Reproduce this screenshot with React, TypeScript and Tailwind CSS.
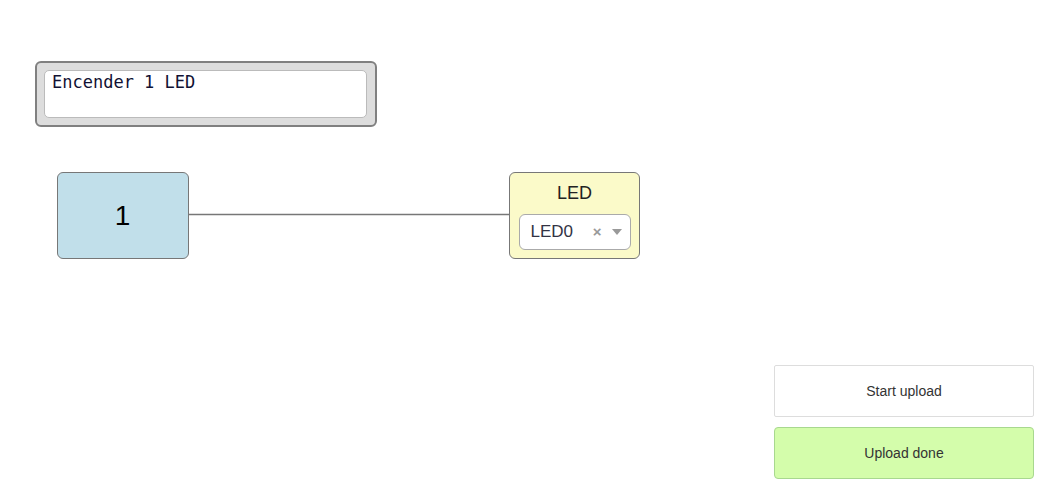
import React from "react";

export default function App() {
  return (
    <div className="relative w-[1054px] h-[495px] bg-white overflow-hidden" style={{ fontFamily: '"Liberation Sans", Arial, sans-serif' }}>
      {/* comment box */}
      <div className="absolute left-[35px] top-[61px] w-[342px] h-[66px] rounded-[6px] border-2 border-[#808080] bg-[#dddddd] pl-[7px] pr-[8px] pt-[7px] pb-[7px]">
        <div className="h-full rounded-[5px] border border-[#bbbbbb] bg-white px-[7px] pt-[1px] text-[17px] leading-[20px] text-[#111133]" style={{ fontFamily: '"DejaVu Sans Mono", "Liberation Mono", monospace' }}>
          Encender 1 LED
        </div>
      </div>

      {/* connector */}
      <svg className="absolute left-0 top-0" width="1054" height="495">
        <line x1="188" y1="214.5" x2="510" y2="214.5" stroke="#777777" strokeWidth="1.5" />
      </svg>

      {/* number node */}
      <div className="absolute left-[57px] top-[172px] w-[132px] h-[87px] rounded-[6px] border border-[#777777] bg-[#c1dfea] flex items-center justify-center pr-[1px] text-[28px] text-black">
        1
      </div>

      {/* LED node */}
      <div className="absolute left-[509px] top-[172px] w-[131px] h-[87px] rounded-[6px] border border-[#777777] bg-[#fbfac9] flex flex-col items-center">
        <div className="mt-[9px] text-[18px] leading-[22px] text-[#222222]">LED</div>
        <div className="mt-[10px] w-[112px] h-[36px] rounded-[6px] border border-[#aaaaaa] bg-white flex items-center pl-[11px] pr-[8px]">
          <span className="text-[17px] text-[#333344] flex-1">LED0</span>
          <span className="text-[15px] font-bold text-[#999999] mr-[10px]">×</span>
          <svg width="10" height="6" viewBox="0 0 10 6">
            <path d="M0 0 L10 0 L5 6 Z" fill="#999999" />
          </svg>
        </div>
      </div>

      {/* buttons */}
      <div className="absolute left-[774px] top-[365px] w-[260px] flex flex-col gap-[10px]">
        <div className="h-[52px] rounded-[2px] border border-[#dddddd] bg-white flex items-center justify-center text-[14px] text-[#333333]">
          Start upload
        </div>
        <div className="h-[52px] rounded-[4px] border border-[#a8d88f] bg-[#d4fdab] flex items-center justify-center text-[14px] text-[#333333]">
          Upload done
        </div>
      </div>
    </div>
  );
}
